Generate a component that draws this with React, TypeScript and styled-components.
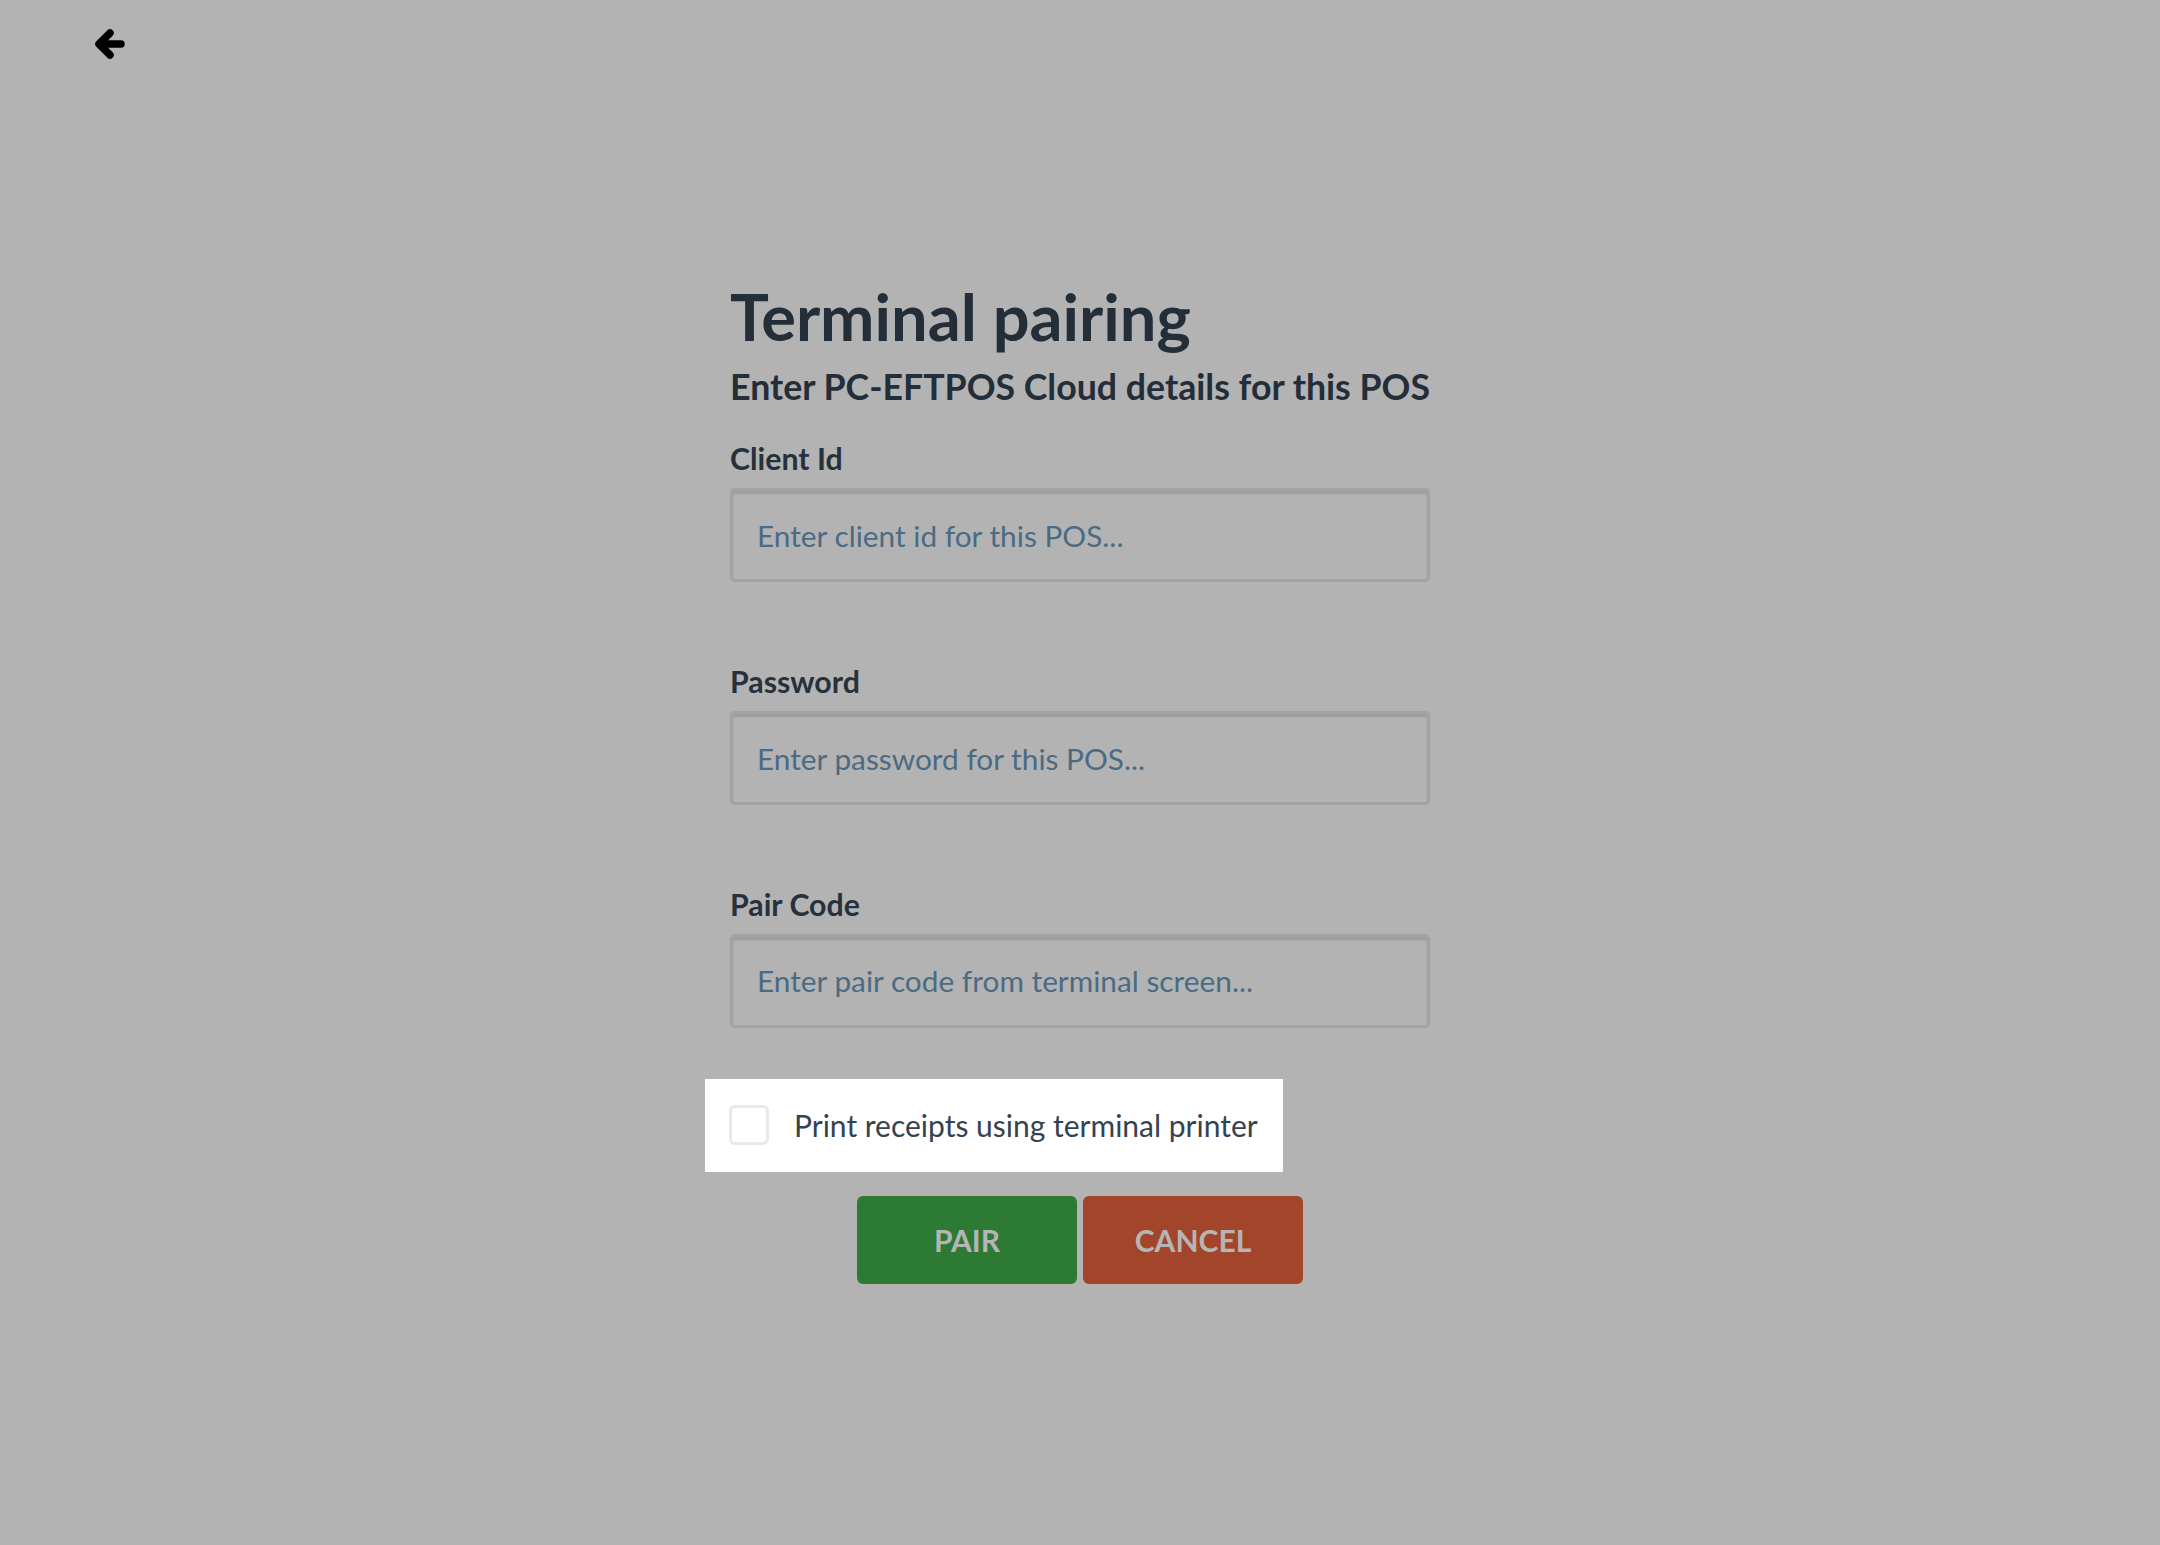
import styled, {createGlobalStyle} from "styled-components";

const GlobalStyle = createGlobalStyle`
  html, body {
    margin: 0;
    padding: 0;
    background: #b3b3b3;
  }
  body {
    font-family: Lato, "Open Sans", sans-serif;
  }
  * {
    box-sizing: border-box;
  }
`;

const Page = styled.div`
  min-height: 100vh;
  display: flex;
  flex-direction: column;
`;

const TopBar = styled.div`
  display: flex;
  padding: 29px 95px 0;
`;

const BackButton = styled.button`
  width: 30px;
  height: 30px;
  padding: 0;
  border: none;
  background: none;
  cursor: pointer;
  display: flex;
`;

const Form = styled.form`
  width: 700px;
  margin: 218px auto 0;
  display: flex;
  flex-direction: column;
`;

const Title = styled.h1`
  margin: 0;
  font-size: 65px;
  font-weight: 700;
  line-height: 1.2;
  color: #232e39;
`;

const Subtitle = styled.h2`
  margin: 11px 0 0;
  font-size: 35.7px;
  font-weight: 700;
  line-height: 1.2;
  white-space: nowrap;
  color: #232e39;
`;

const Fields = styled.div`
  display: flex;
  flex-direction: column;
  gap: 80.5px;
  margin-top: 31px;
`;

const Field = styled.div`
  display: flex;
  flex-direction: column;
`;

const Label = styled.label`
  display: block;
  font-size: 30.3px;
  font-weight: 700;
  line-height: 1.2;
  color: #26313c;
  margin-bottom: 12px;
`;

const Input = styled.input`
  width: 100%;
  height: 94px;
  padding: 0 24px;
  border: 3px solid #9ea4a8;
  border-radius: 5px;
  box-shadow: inset 0 3px 2px rgba(0, 0, 0, 0.12);
  background: transparent;
  outline: none;
  font-family: inherit;
  font-size: 29.8px;
  color: #26313c;

  &::placeholder {
    color: #4b6b85;
    opacity: 1;
  }
`;

const CheckRow = styled.label`
  align-self: flex-start;
  display: flex;
  align-items: center;
  gap: 25px;
  height: 93px;
  margin: 51px 0 0 -25px;
  padding: 0 25px 0 24px;
  background: #fff;
  font-size: 30px;
  color: #34434f;
  cursor: pointer;
`;

const CheckBox = styled.input`
  appearance: none;
  margin: 0;
  width: 40px;
  height: 40px;
  border: 3.5px solid #e5eaed;
  border-radius: 6px;
  background: #fff;
  cursor: pointer;
`;

const Actions = styled.div`
  display: flex;
  justify-content: center;
  gap: 6px;
  margin-top: 24px;
`;

const ActionButton = styled.button<{$tone: "pair" | "cancel"}>`
  width: 220px;
  height: 88px;
  border: none;
  border-radius: 6px;
  background: ${({$tone}) => ($tone === "pair" ? "#2d7a35" : "#a3452a")};
  color: #b5b5b5;
  font-family: inherit;
  font-size: 30px;
  font-weight: 700;
  text-transform: uppercase;
  cursor: pointer;
`;

const ArrowIcon = () => (
  <svg width="30" height="30" viewBox="0 0 30 30" fill="none">
    <path
      d="M15 4 L4 15 L15 26 M4 15 H26"
      stroke="#000"
      strokeWidth="7.5"
      strokeLinecap="round"
      strokeLinejoin="round"
    />
  </svg>
);

const fields = [
  {id: "clientId", label: "Client Id", placeholder: "Enter client id for this POS...", type: "text"},
  {id: "password", label: "Password", placeholder: "Enter password for this POS...", type: "password"},
  {id: "pairCode", label: "Pair Code", placeholder: "Enter pair code from terminal screen...", type: "text"},
];

export default function App() {
  return (
    <>
      <GlobalStyle />
      <Page>
        <TopBar>
          <BackButton type="button" aria-label="Back">
            <ArrowIcon />
          </BackButton>
        </TopBar>
        <Form onSubmit={(e) => e.preventDefault()}>
          <Title>Terminal pairing</Title>
          <Subtitle>Enter PC-EFTPOS Cloud details for this POS</Subtitle>
          <Fields>
            {fields.map((f) => (
              <Field key={f.id}>
                <Label htmlFor={f.id}>{f.label}</Label>
                <Input id={f.id} type={f.type} placeholder={f.placeholder} />
              </Field>
            ))}
          </Fields>
          <CheckRow>
            <CheckBox type="checkbox" />
            Print receipts using terminal printer
          </CheckRow>
          <Actions>
            <ActionButton type="submit" $tone="pair">Pair</ActionButton>
            <ActionButton type="button" $tone="cancel">Cancel</ActionButton>
          </Actions>
        </Form>
      </Page>
    </>
  );
}
